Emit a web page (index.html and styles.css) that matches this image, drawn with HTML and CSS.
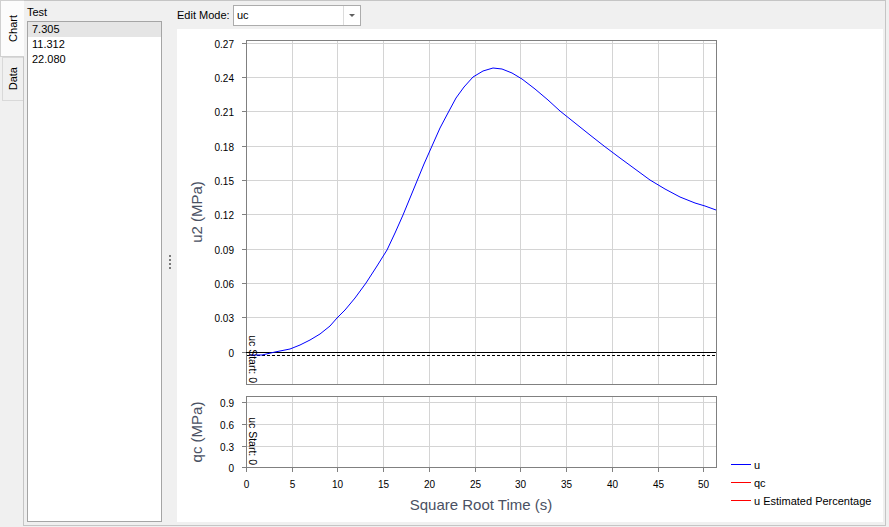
FILE: index.html
```html
<!DOCTYPE html>
<html lang="en">
<head>
  <meta charset="UTF-8">
  <title>Test Chart</title>
  <link rel="stylesheet" href="styles.css">
</head>
<body>
  <div class="app">
    <div class="tabs">
      <div class="tab active"><span>Chart</span></div>
      <div class="tab"><span>Data</span></div>
    </div>

    <div class="panel">
      <div class="tests">
        <div class="tests-label">Test</div>
        <ul class="tests-list">
          <li class="sel">7.305</li>
          <li>11.312</li>
          <li>22.080</li>
        </ul>
      </div>

      <div class="splitter"><i></i><i></i><i></i><i></i></div>

      <div class="chart-pane">
        <div class="toolbar">
          <label class="toolbar-label">Edit Mode:</label>
          <div class="combo">
            <span class="combo-value">uc</span>
            <span class="combo-btn"><b></b></span>
          </div>
        </div>

        <div class="chart">
          <svg width="706" height="493" viewBox="0 0 706 493">
            <!-- grid -->
            <path class="grid" d="M69 14.5H539M69 48.5H539M69 82.5H539M69 117.5H539M69 151.5H539M69 185.5H539M69 220.5H539M69 254.5H539M69 288.5H539
              M115.5 11V355M160.5 11V355M206.5 11V355M252.5 11V355M298.5 11V355M343.5 11V355M389.5 11V355M435.5 11V355M481.5 11V355M526.5 11V355
              M69 373.5H539M69 395.5H539M69 417.5H539
              M115.5 367V438M160.5 367V438M206.5 367V438M252.5 367V438M298.5 367V438M343.5 367V438M389.5 367V438M435.5 367V438M481.5 367V438M526.5 367V438"/>

            <!-- frames -->
            <path class="frame" d="M69.5 11.5H539.5V355.5H69.5ZM69.5 367.5H539.5V438.5H69.5Z"/>

            <!-- ticks -->
            <path class="frame" d="M65 14.5H69M65 48.5H69M65 82.5H69M65 117.5H69M65 151.5H69M65 185.5H69M65 220.5H69M65 254.5H69M65 288.5H69M65 323.5H69
              M65 373.5H69M65 395.5H69M65 417.5H69M65 438.5H69
              M69.5 438V443M115.5 438V443M160.5 438V443M206.5 438V443M252.5 438V443M298.5 438V443M343.5 438V443M389.5 438V443M435.5 438V443M481.5 438V443M526.5 438V443"/>

            <!-- zero lines -->
            <path class="zero" d="M69 323.5H539"/>
            <path class="zero dashed" d="M70 326.5H539"/>

            <!-- u curve -->
            <polyline class="curve" points="72,326 85,326 98,323 113,320 123,316 133,311 143,305 153,297 160,289 168,281 178,269 189,254 200,237 210,221 218,204 226,186 233,169 240,152 247,135 255,117 263,99 272,82 279,69 287,58 296,48 306,42 316,39 325,40 335,44 345,50 358,60 371,71 383,82 398,94 413,106 427,117 443,129 458,140 473,151 488,160 503,168 518,174 528,177 539,181"/>

            <!-- start markers -->
            <text class="marker-text" transform="translate(72,354) rotate(90)" text-anchor="end">uc Start: 0</text>
            <text class="marker-text" transform="translate(72,436) rotate(90)" text-anchor="end">uc Start: 0</text>

            <!-- y labels -->
            <g class="tick-text" text-anchor="end">
              <text x="57" y="18.5">0.27</text>
              <text x="57" y="52.5">0.24</text>
              <text x="57" y="86.5">0.21</text>
              <text x="57" y="121.5">0.18</text>
              <text x="57" y="155.5">0.15</text>
              <text x="57" y="189.5">0.12</text>
              <text x="57" y="224.5">0.09</text>
              <text x="57" y="258.5">0.06</text>
              <text x="57" y="292.5">0.03</text>
              <text x="57" y="327.5">0</text>
              <text x="57" y="377.5">0.9</text>
              <text x="57" y="399.5">0.6</text>
              <text x="57" y="421.5">0.3</text>
              <text x="57" y="442.5">0</text>
            </g>

            <!-- x labels -->
            <g class="tick-text" text-anchor="middle">
              <text x="69.5" y="459">0</text>
              <text x="115.5" y="459">5</text>
              <text x="160.5" y="459">10</text>
              <text x="206.5" y="459">15</text>
              <text x="252.5" y="459">20</text>
              <text x="298.5" y="459">25</text>
              <text x="343.5" y="459">30</text>
              <text x="389.5" y="459">35</text>
              <text x="435.5" y="459">40</text>
              <text x="481.5" y="459">45</text>
              <text x="526.5" y="459">50</text>
            </g>

            <!-- axis titles -->
            <text class="axis-title" transform="translate(25,183) rotate(-90)" text-anchor="middle">u2 (MPa)</text>
            <text class="axis-title" transform="translate(25,403) rotate(-90)" text-anchor="middle">qc (MPa)</text>
            <text class="axis-title" x="304" y="481" text-anchor="middle">Square Root Time (s)</text>

            <!-- legend -->
            <path class="legend-u" d="M554 435.5H574"/>
            <path class="legend-qc" d="M554 453.5H574M554 471.5H574"/>
            <text class="legend-text" x="577" y="439.5">u</text>
            <text class="legend-text" x="577" y="457.5">qc</text>
            <text class="legend-text" x="577" y="475.5">u Estimated Percentage</text>
          </svg>
        </div>
      </div>
    </div>
  </div>
</body>
</html>
```

FILE: styles.css
```css
* {
  margin: 0;
  padding: 0;
  box-sizing: border-box;
}
html, body {
  height: 100%;
  overflow: hidden;
}
body {
  background: #f0f0f0;
  font-family: "Liberation Sans", Arial, sans-serif;
  font-size: 11px;
  color: #000;
}

.app {
  display: flex;
  height: 527px;
}

/* vertical tabs */
.tabs {
  width: 23px;
  flex: none;
  display: flex;
  flex-direction: column;
  position: relative;
  z-index: 1;
}
.tab {
  display: flex;
  align-items: center;
  justify-content: center;
  border: 1px solid #d9d9d9;
  border-right: none;
  margin-left: 2px;
  height: 44px;
  background: #f0f0f0;
}
.tab span {
  writing-mode: vertical-rl;
  transform: rotate(180deg);
}
.tab.active {
  margin-left: 0;
  width: 24px;
  height: 57px;
  background: #fcfcfc;
  border-color: #d0d0d0;
}

.panel {
  flex: none;
  width: 863px;
  height: 526px;
  border: 1px solid #c5c5c5;
  display: flex;
  padding: 0 2px 3px 3px;
}

/* test list */
.tests {
  width: 135px;
  display: flex;
  flex-direction: column;
}
.tests-label {
  height: 20px;
  padding-top: 2px;
  line-height: 18px;
}
.tests-list {
  flex: 1;
  list-style: none;
  background: #fff;
  border: 1px solid #a5a5a5;
}
.tests-list li {
  height: 15px;
  line-height: 15px;
  padding-left: 4px;
}
.tests-list li.sel {
  background: #e5e5e5;
}

.splitter {
  width: 15px;
  display: flex;
  flex-direction: column;
  align-items: center;
  justify-content: center;
  gap: 2px;
  padding-left: 1px;
}
.splitter i {
  width: 2px;
  height: 2px;
  background: #7a7a7a;
}

/* chart side */
.chart-pane {
  width: 706px;
  display: flex;
  flex-direction: column;
}
.toolbar {
  height: 28px;
  display: flex;
  align-items: flex-start;
  padding-top: 4px;
}
.toolbar-label {
  width: 56px;
  line-height: 21px;
}
.combo {
  width: 128px;
  height: 21px;
  display: flex;
  background: #fff;
  border: 1px solid #acacac;
}
.combo-value {
  flex: 1;
  padding-left: 3px;
  line-height: 19px;
}
.combo-btn {
  width: 17px;
  border-left: 1px solid #dcdcdc;
  display: flex;
  align-items: center;
  justify-content: center;
}
.combo-btn b {
  width: 0;
  height: 0;
  border-left: 3px solid transparent;
  border-right: 3px solid transparent;
  border-top: 3px solid #606060;
}

.chart {
  height: 493px;
  background: #fff;
}
.chart svg {
  display: block;
}
.chart text {
  font-family: "Liberation Sans", Arial, sans-serif;
}
.grid {
  fill: none;
  stroke: #d4d4d4;
  shape-rendering: crispEdges;
}
.frame {
  fill: none;
  stroke: #808080;
  shape-rendering: crispEdges;
}
.zero {
  fill: none;
  stroke: #000;
  shape-rendering: crispEdges;
}
.zero.dashed {
  stroke-dasharray: 3 2;
}
.curve {
  fill: none;
  stroke: #0000ff;
  stroke-width: 1;
  stroke-linejoin: round;
}
.tick-text {
  font-size: 10px;
  fill: #000;
}
.marker-text {
  font-size: 10.5px;
  fill: #000;
}
.axis-title {
  font-size: 15px;
  fill: #4a5163;
}
.legend-u {
  stroke: #0000ff;
  shape-rendering: crispEdges;
}
.legend-qc {
  stroke: #ff0000;
  shape-rendering: crispEdges;
}
.legend-text {
  font-size: 11px;
  fill: #000;
}
```
